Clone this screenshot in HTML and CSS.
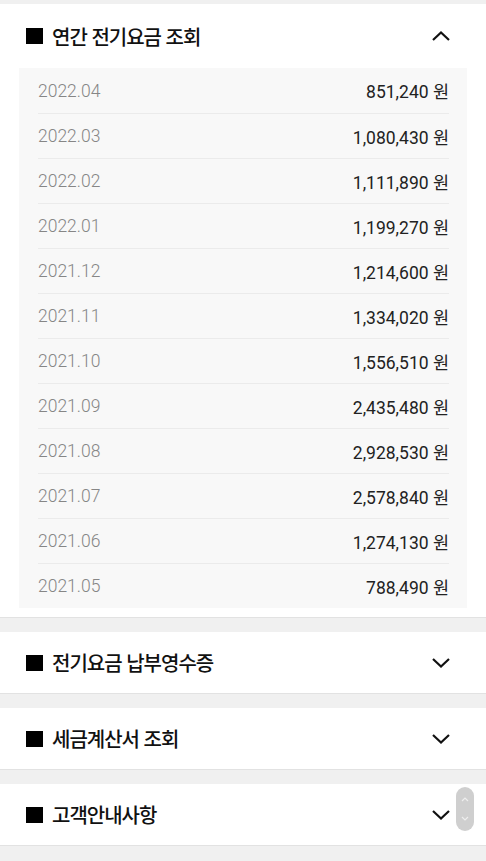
FILE: index.html
```html
<!DOCTYPE html>
<html lang="ko">
<head>
    <meta charset="UTF-8">
    <meta name="viewport" content="width=device-width, initial-scale=1.0">
    <title>전기요금 조회</title>
    <link rel="stylesheet" href="styles.css">
</head>
<body>
    <div class="page">
        <section class="panel open">
            <div class="panel__head">
                <span class="mark"></span>
                <h2 class="panel__title">연간 전기요금 조회</h2>
                <svg class="arrow" width="20" height="12" viewBox="0 0 20 12"><path d="M2 10 L10 2.5 L18 10" fill="none" stroke="#111" stroke-width="2.2"/></svg>
            </div>
            <ul class="bill-list">
                <li class="bill"><span class="bill__date">2022.04</span><span class="bill__amount">851,240 원</span></li>
                <li class="bill"><span class="bill__date">2022.03</span><span class="bill__amount">1,080,430 원</span></li>
                <li class="bill"><span class="bill__date">2022.02</span><span class="bill__amount">1,111,890 원</span></li>
                <li class="bill"><span class="bill__date">2022.01</span><span class="bill__amount">1,199,270 원</span></li>
                <li class="bill"><span class="bill__date">2021.12</span><span class="bill__amount">1,214,600 원</span></li>
                <li class="bill"><span class="bill__date">2021.11</span><span class="bill__amount">1,334,020 원</span></li>
                <li class="bill"><span class="bill__date">2021.10</span><span class="bill__amount">1,556,510 원</span></li>
                <li class="bill"><span class="bill__date">2021.09</span><span class="bill__amount">2,435,480 원</span></li>
                <li class="bill"><span class="bill__date">2021.08</span><span class="bill__amount">2,928,530 원</span></li>
                <li class="bill"><span class="bill__date">2021.07</span><span class="bill__amount">2,578,840 원</span></li>
                <li class="bill"><span class="bill__date">2021.06</span><span class="bill__amount">1,274,130 원</span></li>
                <li class="bill"><span class="bill__date">2021.05</span><span class="bill__amount">788,490 원</span></li>
            </ul>
        </section>

        <section class="panel">
            <div class="panel__head">
                <span class="mark"></span>
                <h2 class="panel__title">전기요금 납부영수증</h2>
                <svg class="arrow" width="20" height="12" viewBox="0 0 20 12"><path d="M2 2 L10 9.5 L18 2" fill="none" stroke="#111" stroke-width="2.2"/></svg>
            </div>
        </section>

        <section class="panel">
            <div class="panel__head">
                <span class="mark"></span>
                <h2 class="panel__title">세금계산서 조회</h2>
                <svg class="arrow" width="20" height="12" viewBox="0 0 20 12"><path d="M2 2 L10 9.5 L18 2" fill="none" stroke="#111" stroke-width="2.2"/></svg>
            </div>
        </section>

        <section class="panel">
            <div class="panel__head">
                <span class="mark"></span>
                <h2 class="panel__title">고객안내사항</h2>
                <svg class="arrow" width="20" height="12" viewBox="0 0 20 12"><path d="M2 2 L10 9.5 L18 2" fill="none" stroke="#111" stroke-width="2.2"/></svg>
            </div>
        </section>
    </div>

    <div class="scroll-pill">
        <svg width="18" height="44" viewBox="0 0 18 44"><path d="M6 14 L9 11 L12 14" fill="none" stroke="#eee" stroke-width="1.2"/><path d="M6 30 L9 33 L12 30" fill="none" stroke="#eee" stroke-width="1.2"/></svg>
    </div>
</body>
</html>
```

FILE: styles.css
```css
html{
    height: 100%;
}
body{
    margin: 0;
    min-height: 100%;
    background-color: #f0f0f0;
    font-family: Roboto, "Noto Sans CJK KR", sans-serif;
}
.page{
    display: flex;
    flex-direction: column;
    gap: 14px;
    padding-top: 4px;
}
.panel{
    background-color: white;
    border-bottom: 1px solid #e2e2e2;
}
.panel.open{
    padding-bottom: 9px;
}
.panel__head{
    display: flex;
    align-items: center;
    height: 61px;
    padding: 0 35px 0 26px;
}
.open .panel__head{
    height: 64px;
}
.mark{
    display: inline-block;
    width: 17px;
    height: 16px;
    background-color: black;
    margin-right: 9px;
}
.panel__title{
    flex: 1;
    margin: 0;
    font-family: "Noto Sans CJK KR", sans-serif;
    font-size: 20px;
    font-weight: 500;
    letter-spacing: -1px;
    color: #111;
}
.arrow{
    display: block;
}
.bill-list{
    list-style: none;
    margin: 0 19px;
    padding: 0 18px 0 19px;
    background-color: #f8f8f8;
}
.bill{
    display: flex;
    justify-content: space-between;
    align-items: center;
    height: 45px;
    border-top: 1px solid #ebebeb;
    box-sizing: border-box;
    font-size: 17.5px;
}
.bill:first-child{
    border-top: none;
}
.bill__date{
    color: #868686;
    font-weight: 300;
}
.bill__amount{
    color: #222;
}
.scroll-pill{
    position: fixed;
    left: 456px;
    top: 787px;
    width: 18px;
    height: 44px;
    border-radius: 9px;
    background-color: #cfcfcf;
}
.scroll-pill svg{
    display: block;
}
```
